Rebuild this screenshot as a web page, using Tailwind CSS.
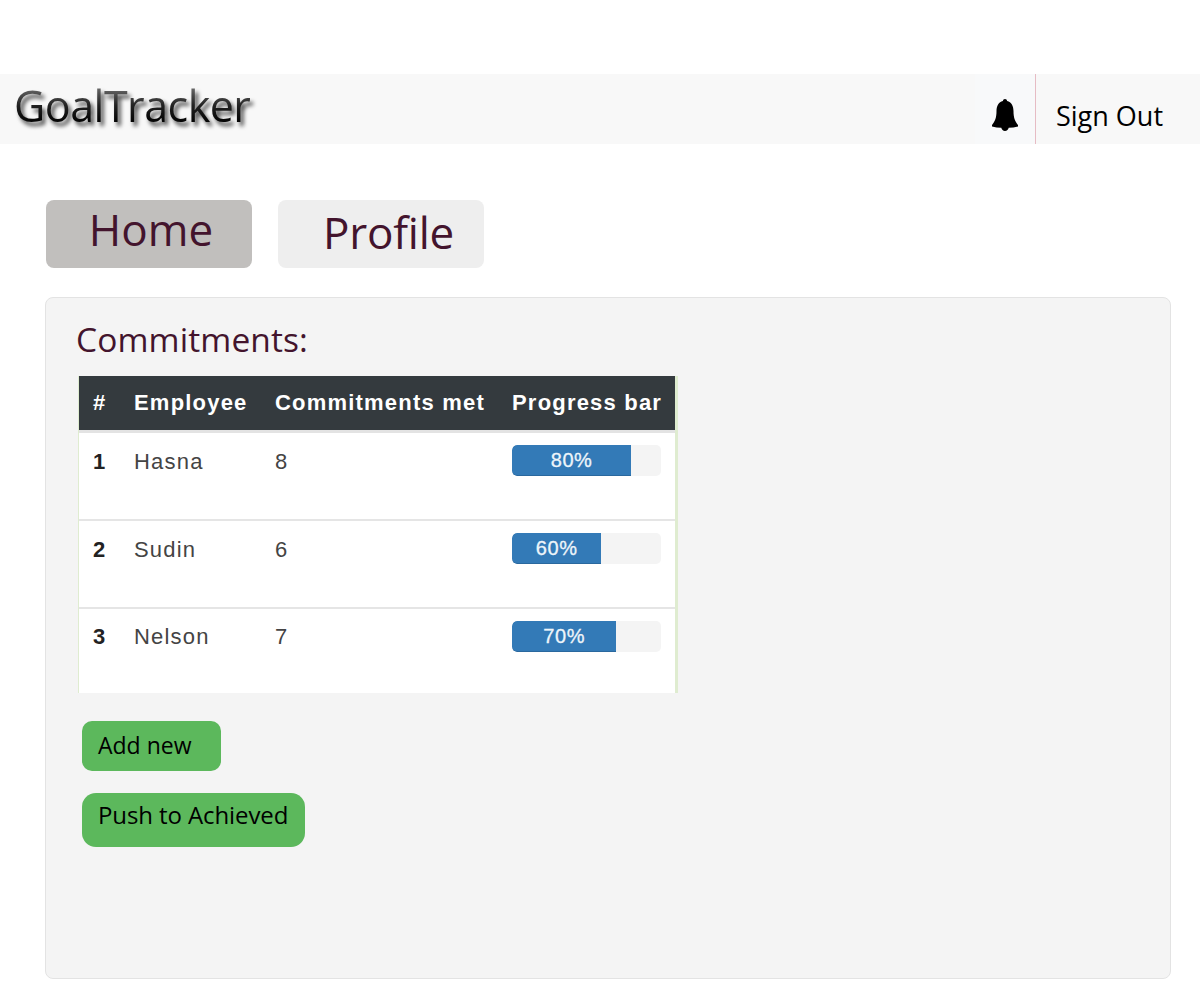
<!DOCTYPE html>
<html lang="en">
  <head>
    <meta charset="UTF-8" />
    <title>GoalTracker</title>
    <script src="https://cdn.jsdelivr.net/npm/@tailwindcss/browser@4"></script>
  </head>
  <body class="bg-white font-['Open_Sans',sans-serif]">
    <div class="pt-[74px]">
      <!-- navbar -->
      <nav class="h-[70px] bg-[#f8f8f8] flex justify-between">
        <div class="pl-[14px] pt-[3px] drop-shadow-[3px_4px_2px_rgba(0,0,0,0.75)]">
          <span class="text-[43px] leading-[58px] font-medium tracking-[-0.5px] bg-linear-to-b from-[#a0a0a0] via-[#222] to-black bg-clip-text text-transparent">GoalTracker</span>
        </div>
        <div class="flex">
          <div class="w-[60px] flex items-center justify-center pt-[11px] bg-[#f8f9fa]">
            <svg width="26" height="32" viewBox="0 0 26 32" fill="#000">
              <path d="M13 0c-1.200 0-2 .7-2.100 2C6.600 3.200 4.500 7 4.500 12c0 6.500-1.300 10-4.500 14v1.500c3 .8 6.200 1.200 9.300 1.300.4 1.800 1.800 3.200 3.700 3.200s3.300-1.400 3.700-3.200c3.100-.1 6.300-.5 9.300-1.300V26c-3.200-4-4.500-7.500-4.500-14 0-5-2.100-8.800-6.400-10C15 .7 14.200 0 13 0z" />
            </svg>
          </div>
          <div class="w-[165px] border-l border-[#e6bcc4] pl-[20px] pt-[23px] text-[27px] leading-[38px] text-black">Sign Out</div>
        </div>
      </nav>

      <main class="px-[45px] pr-[29px]">
        <!-- tabs -->
        <div class="flex gap-[26px] pt-[56px] pl-px">
          <a class="w-[206px] h-[68px] rounded-lg bg-[#c1bfbd] text-[#43142d] text-[44px] leading-[58px] text-center pl-[4px]">Home</a>
          <a class="w-[206px] h-[68px] rounded-lg bg-[#eeeeee] text-[#43142d] text-[44px] tracking-[-0.2px] leading-[64px] text-center pl-[15px]">Profile</a>
        </div>

        <!-- panel -->
        <section class="mt-[29px] h-[682px] rounded-lg border border-[#e3e3e3] bg-[#f4f4f4] pl-[30px] pt-[20px]">
          <h2 class="text-[33.5px] leading-[42px] tracking-[0.1px] text-[#43142d]">Commitments:</h2>

          <div class="mt-[16px] ml-[2px] w-[600px] h-[317px] bg-white border-l border-r-[3px] border-[#dfecd0] overflow-hidden">
            <table class="w-[596px] table-fixed font-['Liberation_Sans',sans-serif] text-[22px] tracking-[1.2px] text-[#444]">
              <colgroup>
                <col class="w-[41px]" />
                <col class="w-[141px]" />
                <col class="w-[237px]" />
                <col class="w-[177px]" />
              </colgroup>
              <thead>
                <tr class="h-[55px] bg-[#343a3e] text-white font-bold text-left border-b-[3px] border-[#e3e3e3]">
                  <th class="pl-[14px]">#</th>
                  <th class="pl-[14px]">Employee</th>
                  <th class="pl-[14px]">Commitments met</th>
                  <th class="pl-[14px]">Progress bar</th>
                </tr>
              </thead>
              <tbody>
                <tr class="h-[89px] border-b-2 border-[#e5e5e5] align-top">
                  <td class="pl-[14px] pt-[12px] font-bold text-[#222]">1</td>
                  <td class="pl-[14px] pt-[12px]">Hasna</td>
                  <td class="pl-[14px] pt-[12px]">8</td>
                  <td class="pl-[14px] pt-[12px]">
                    <div class="w-[149px] h-[31px] rounded-[5px] bg-[#f4f4f4] overflow-hidden">
                      <div class="h-full rounded-l-[5px] bg-[#337ab7] border-b border-[#2a689e] text-[#eef5fa] text-[20px] tracking-[0.6px] leading-[30px] text-center [-webkit-text-stroke:0.3px_#eef5fa]" style="width: 80%">80%</div>
                    </div>
                  </td>
                </tr>
                <tr class="h-[88px] border-b-2 border-[#e5e5e5] align-top">
                  <td class="pl-[14px] pt-[12px] font-bold text-[#222]">2</td>
                  <td class="pl-[14px] pt-[12px]">Sudin</td>
                  <td class="pl-[14px] pt-[12px]">6</td>
                  <td class="pl-[14px] pt-[12px]">
                    <div class="w-[149px] h-[31px] rounded-[5px] bg-[#f4f4f4] overflow-hidden">
                      <div class="h-full rounded-l-[5px] bg-[#337ab7] border-b border-[#2a689e] text-[#eef5fa] text-[20px] tracking-[0.6px] leading-[30px] text-center [-webkit-text-stroke:0.3px_#eef5fa]" style="width: 60%">60%</div>
                    </div>
                  </td>
                </tr>
                <tr class="h-[85px] align-top">
                  <td class="pl-[14px] pt-[11px] font-bold text-[#222]">3</td>
                  <td class="pl-[14px] pt-[11px]">Nelson</td>
                  <td class="pl-[14px] pt-[11px]">7</td>
                  <td class="pl-[14px] pt-[12px]">
                    <div class="w-[149px] h-[31px] rounded-[5px] bg-[#f4f4f4] overflow-hidden">
                      <div class="h-full rounded-l-[5px] bg-[#337ab7] border-b border-[#2a689e] text-[#eef5fa] text-[20px] tracking-[0.6px] leading-[30px] text-center [-webkit-text-stroke:0.3px_#eef5fa]" style="width: 70%">70%</div>
                    </div>
                  </td>
                </tr>
              </tbody>
            </table>
          </div>

          <!-- buttons -->
          <div class="ml-[6px] mt-[28px] flex flex-col items-start gap-[22px] text-black">
            <button class="w-[139px] h-[50px] rounded-[10px] bg-[#5cb85c] text-left pl-[16px] text-[23px] leading-[48px] pb-[2px]">Add new</button>
            <button class="w-[223px] h-[54px] rounded-[14px] bg-[#5cb85c] text-left pl-[16px] text-[24px] tracking-[-0.1px] leading-[44px] pb-[10px]">Push to Achieved</button>
          </div>
        </section>
      </main>
    </div>
  </body>
</html>
